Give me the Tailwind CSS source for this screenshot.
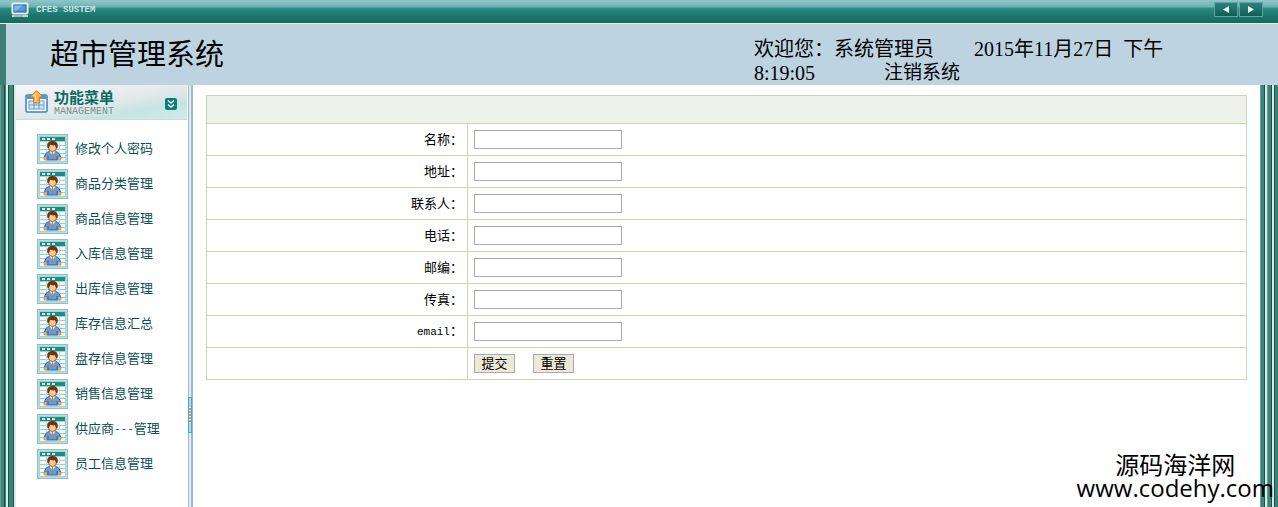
<!DOCTYPE html>
<html lang="zh-CN">
<head>
  <meta charset="UTF-8" />
  <meta name="viewport" content="width=device-width, initial-scale=1.0" />
  <title>超市管理系统</title>
  <script src="https://cdn.jsdelivr.net/npm/@tailwindcss/browser@4"></script>
</head>

<body class="relative flex min-h-screen flex-col overflow-x-hidden bg-white font-['Liberation_Serif','Noto_Sans_CJK_SC',serif] text-black">

<!-- shared icons -->
<svg class="hidden">
  <symbol id="icon-user" viewBox="0 0 31 30">
    <rect x="0.5" y="0.5" width="30" height="29" fill="#b9dedb" stroke="#8fc0bd" />
    <rect x="2" y="2" width="27" height="26" fill="#a4d3d0" />
    <rect x="3" y="8" width="25" height="19" fill="#f4fbfa" />
    <path d="M3 11.5h25M3 15.5h25M3 19.5h25M3 23.5h25" stroke="#9fc9c6" />
    <path d="M9.5 8v19M22.5 8v19" stroke="#c4e0de" />
    <rect x="3" y="3" width="25" height="4" fill="#1b8d86" />
    <path d="M5 5h3M10 5h3M15 5h3" stroke="#e4f6f4" stroke-width="2" />
    <path d="M7.500 24.500c0-4 2-6.500 5-7h6c3 0.500 5 3 5 7l-3 1.500h-10z" fill="#5b9fe8" stroke="#2460b0" />
    <path d="M11 22v3.500M20 22v3.500" stroke="#2460b0" />
    <path d="M7 23h3v3H7zM21 23h3v3h-3z" fill="#f2b26a" stroke="#b96a2c" stroke-width="0.500" />
    <path d="M12.500 17h6l-3 5z" fill="#fff" />
    <path d="M15 18h1l1 4-1.500 2-1.500-2z" fill="#e27a1c" />
    <ellipse cx="15.500" cy="13.500" rx="4" ry="4" fill="#fac890" stroke="#a35a22" />
    <path d="M10.500 14c-1-5 1-7 5-7s6 2 5 7l-1.500 0-1-3c-2 1-4 0-5-0.500l-1 3.500z" fill="#6d3410" />
  </symbol>
</svg>

<header>
  <div class="flex h-6 items-start justify-between border-b border-[#dcefed] bg-[linear-gradient(#8fc6c9_0px,#6fb2b3_7px,#338a87_8px,#1d7a72_14px,#166a60_23px)]">
    <div class="flex items-center pt-[2px] pl-[11px]">
      <svg class="h-4 w-[18px]" viewBox="0 0 18 16">
        <rect x="1" y="1" width="16" height="11" rx="1" fill="#dfe6ea" stroke="#f3f7f8" />
        <rect x="3" y="3" width="12" height="7" fill="#4b9de0" stroke="#2a5f8f" />
        <path d="M3.500 9.500v-6H12z" fill="#7fbdf0" />
        <path d="M1 13h16v2H1z" fill="#cfd6da" />
        <path d="M3 14h9" stroke="#8b979d" />
      </svg>
      <span class="ml-[7px] font-['Liberation_Mono',monospace] text-[9px] leading-4 font-bold text-[#c9e4e1]">CFES SUSTEM</span>
    </div>
    <div class="mr-[15px] flex gap-px pt-[2px]">
      <button type="button" aria-label="后退" class="flex h-[15px] w-6 items-center justify-center border border-[#5fa5a0] bg-[linear-gradient(#2d837d,#0f5d55)]">
        <svg class="h-[7px] w-[6px]" viewBox="0 0 6 7"><path d="M6 0v7L0 3.500z" fill="#eef8f7" /></svg>
      </button>
      <button type="button" aria-label="前进" class="flex h-[15px] w-6 items-center justify-center border border-[#5fa5a0] bg-[linear-gradient(#2d837d,#0f5d55)]">
        <svg class="h-[7px] w-[6px]" viewBox="0 0 6 7"><path d="M0 0v7l6-3.500z" fill="#eef8f7" /></svg>
      </button>
    </div>
  </div>

  <div class="flex h-[61px] items-center border-l-[6px] border-[#3f7d78] bg-[#bdd4e0]">
    <h1 class="w-[748px] shrink-0 pl-11 text-[29px] leading-[60px]">超市管理系统</h1>
    <div class="pt-3 text-xl leading-6">
      <div class="flex gap-10"><span>欢迎您：系统管理员</span><span>2015年11月27日&nbsp; 下午</span></div>
      <div class="flex"><span class="w-[130px]">8:19:05</span><a href="#" class="text-[19px]">注销系统</a></div>
    </div>
  </div>
</header>

<div class="flex grow">
  <div class="w-4 shrink-0 bg-[linear-gradient(90deg,#6b9d96_0_1px,#3d8379_1px_4px,#0b5549_4px_5px,#3d8379_5px_6px,#dfe9e6_6px_8px,#0b5549_8px_9px,#3d8379_9px_13px,#0b5549_13px_14px,#e0ebe9_14px_16px)]"></div>

  <nav class="w-[172px] shrink-0">
    <div class="mr-px flex h-[35px] items-center border-b border-[#cfdadb] bg-[linear-gradient(170deg,#f5f6f7_0%,#e3e9eb_50%,#c3e5e2_75%,#d3ecea_100%)] pl-[9px]">
      <svg class="h-6 w-[23px]" viewBox="0 0 23 24">
        <rect x="1" y="5" width="21" height="17" rx="1.500" fill="#fff" stroke="#3b7fc6" stroke-width="1.500" />
        <rect x="2" y="5" width="19" height="4" fill="#4f97dc" />
        <rect x="4" y="11" width="15" height="8" fill="#d6e9fa" stroke="#5c9bdc" />
        <path d="M4 15h15M9 11v8M14 11v8" stroke="#5c9bdc" />
        <path d="M11.500 0.500L18 7h-3.500v6h-6V7H5z" fill="#f9b04d" stroke="#d9791a" />
        <path d="M11.500 3l-3 3h2v5" fill="none" stroke="#fde0a8" />
      </svg>
      <div class="ml-[6px] grow pt-[2px]">
        <div class="text-[15px] leading-[17px] font-bold text-[#0b6b60]">功能菜单</div>
        <div class="font-['Liberation_Mono',monospace] text-[10px] leading-[9px] text-[#7f8d8d]">MANAGEMENT</div>
      </div>
      <button type="button" aria-label="展开" class="mt-1 mr-[10px] flex size-3 items-center justify-center rounded-xs bg-[#0c7d76]">
        <svg class="size-3" viewBox="0 0 12 12"><path d="M3 2.500l3 2.500 3-2.500M3 6.500L6 9l3-2.500" fill="none" stroke="#fff" stroke-width="1.500" /></svg>
      </button>
    </div>
    <ul class="flex flex-col gap-[5px] pt-[14px] pl-[21px] text-[13px] leading-[30px] text-[#0b4f55]">
      <li><a href="#" class="flex"><svg class="mr-[7px] h-[30px] w-[31px]"><use href="#icon-user" /></svg>修改个人密码</a></li>
      <li><a href="#" class="flex"><svg class="mr-[7px] h-[30px] w-[31px]"><use href="#icon-user" /></svg>商品分类管理</a></li>
      <li><a href="#" class="flex"><svg class="mr-[7px] h-[30px] w-[31px]"><use href="#icon-user" /></svg>商品信息管理</a></li>
      <li><a href="#" class="flex"><svg class="mr-[7px] h-[30px] w-[31px]"><use href="#icon-user" /></svg>入库信息管理</a></li>
      <li><a href="#" class="flex"><svg class="mr-[7px] h-[30px] w-[31px]"><use href="#icon-user" /></svg>出库信息管理</a></li>
      <li><a href="#" class="flex"><svg class="mr-[7px] h-[30px] w-[31px]"><use href="#icon-user" /></svg>库存信息汇总</a></li>
      <li><a href="#" class="flex"><svg class="mr-[7px] h-[30px] w-[31px]"><use href="#icon-user" /></svg>盘存信息管理</a></li>
      <li><a href="#" class="flex"><svg class="mr-[7px] h-[30px] w-[31px]"><use href="#icon-user" /></svg>销售信息管理</a></li>
      <li><a href="#" class="flex"><svg class="mr-[7px] h-[30px] w-[31px]"><use href="#icon-user" /></svg>供应商<span class="font-['Liberation_Mono',monospace] text-[11px]">---</span>管理</a></li>
      <li><a href="#" class="flex"><svg class="mr-[7px] h-[30px] w-[31px]"><use href="#icon-user" /></svg>员工信息管理</a></li>
    </ul>
  </nav>

  <!-- splitter -->
  <div class="w-[5px] shrink-0 border-r-2 border-l border-r-[#a3b9cb] border-l-[#a3b9cb] bg-[#dcebf5] pt-[312px]">
    <div class="-mx-px flex h-9 w-1 flex-col justify-center border border-[#5ba5b0] bg-[#b4d9e4]">
      <div class="h-4 bg-[repeating-linear-gradient(#fff_0_1px,#8fa9a6_1px_3px)]"></div>
    </div>
  </div>

  <main class="grow px-[13px] pt-[10px]">
    <form>
      <table class="w-full table-fixed border-collapse border border-[#ccd5ad] text-[13px] leading-[19px]">
        <thead>
          <tr class="h-7 bg-[#edf3e9]"><td class="w-[261px] border-b border-[#ccd5ad]"></td><td class="border-b border-[#ccd5ad]"></td></tr>
        </thead>
        <tbody>
          <tr class="h-8 border-b border-[#ccd5ad]">
            <td class="border-r border-[#ccd5ad] pr-1 text-right"><label for="name">名称：</label></td>
            <td class="pl-[6px]"><input id="name" type="text" class="block h-[19px] w-[148px] border border-[#aaa] bg-white px-1" /></td>
          </tr>
          <tr class="h-8 border-b border-[#ccd5ad]">
            <td class="border-r border-[#ccd5ad] pr-1 text-right"><label for="address">地址：</label></td>
            <td class="pl-[6px]"><input id="address" type="text" class="block h-[19px] w-[148px] border border-[#aaa] bg-white px-1" /></td>
          </tr>
          <tr class="h-8 border-b border-[#ccd5ad]">
            <td class="border-r border-[#ccd5ad] pr-1 text-right"><label for="contact">联系人：</label></td>
            <td class="pl-[6px]"><input id="contact" type="text" class="block h-[19px] w-[148px] border border-[#aaa] bg-white px-1" /></td>
          </tr>
          <tr class="h-8 border-b border-[#ccd5ad]">
            <td class="border-r border-[#ccd5ad] pr-1 text-right"><label for="phone">电话：</label></td>
            <td class="pl-[6px]"><input id="phone" type="text" class="block h-[19px] w-[148px] border border-[#aaa] bg-white px-1" /></td>
          </tr>
          <tr class="h-8 border-b border-[#ccd5ad]">
            <td class="border-r border-[#ccd5ad] pr-1 text-right"><label for="postcode">邮编：</label></td>
            <td class="pl-[6px]"><input id="postcode" type="text" class="block h-[19px] w-[148px] border border-[#aaa] bg-white px-1" /></td>
          </tr>
          <tr class="h-8 border-b border-[#ccd5ad]">
            <td class="border-r border-[#ccd5ad] pr-1 text-right"><label for="fax">传真：</label></td>
            <td class="pl-[6px]"><input id="fax" type="text" class="block h-[19px] w-[148px] border border-[#aaa] bg-white px-1" /></td>
          </tr>
          <tr class="h-8 border-b border-[#ccd5ad]">
            <td class="border-r border-[#ccd5ad] pr-1 text-right"><label for="email"><span class="font-['Liberation_Mono',monospace] text-[11px]">email</span>：</label></td>
            <td class="pl-[6px]"><input id="email" type="text" class="block h-[19px] w-[148px] border border-[#aaa] bg-white px-1" /></td>
          </tr>
          <tr class="h-8">
            <td class="border-r border-[#ccd5ad]"></td>
            <td class="pl-[6px]">
              <div class="flex gap-[18px]">
                <button type="submit" class="h-[19px] w-[41px] border border-[#aaa] bg-[#ece9d8] leading-[17px]">提交</button>
                <button type="reset" class="h-[19px] w-[41px] border border-[#aaa] bg-[#ece9d8] leading-[17px]">重置</button>
              </div>
            </td>
          </tr>
        </tbody>
      </table>
    </form>
  </main>

  <div class="w-[18px] shrink-0 bg-[linear-gradient(90deg,#6b9d96_0_1px,#3d8379_1px_4px,#0b5549_4px_5px,#dfe9e6_5px_7px,#6b9d96_7px_8px,#3d8379_8px_11px,#0b5549_11px_12px,#dfe9e6_12px_14px,#0b5549_14px_15px,#3d8379_15px_18px)]"></div>
</div>

<!-- watermark -->
<div class="absolute right-1 bottom-2 text-center font-['Open_Sans','Noto_Sans_CJK_SC',sans-serif] text-2xl leading-[23px]">
  <div>源码海洋网</div>
  <div>www.codehy.com</div>
</div>

</body>
</html>
